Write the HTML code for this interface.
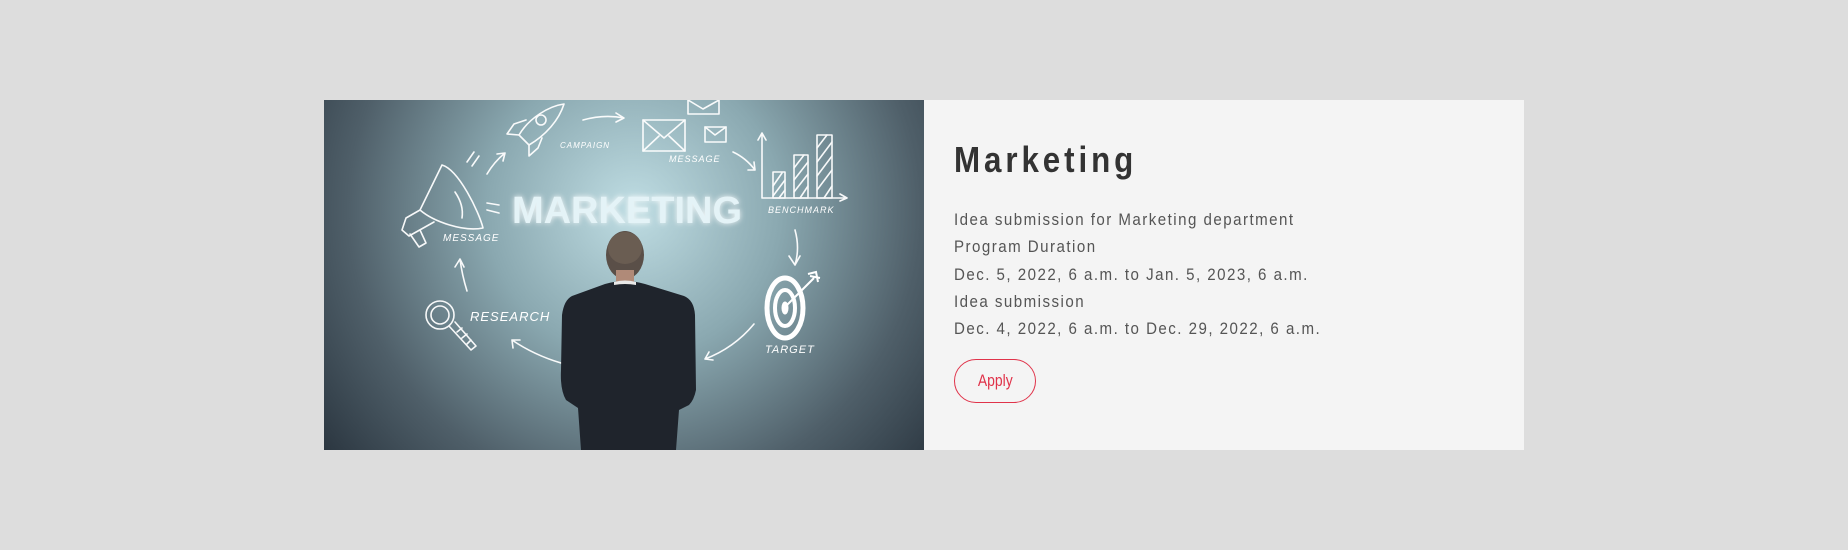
<!DOCTYPE html>
<html><head><meta charset="utf-8"><style>
html,body{margin:0;padding:0;}
body{width:1848px;height:550px;background:#dddddd;position:relative;overflow:hidden;font-family:"Liberation Sans Narrow","Liberation Sans",sans-serif;}
.card{position:absolute;left:324px;top:100px;width:1200px;height:350px;background:#f4f4f4;}
.img{position:absolute;left:0;top:0;width:600px;height:350px;}
.txt{position:absolute;left:600px;top:0;width:600px;height:350px;}
h1{position:absolute;left:30px;top:38px;margin:0;font-size:36px;font-weight:bold;letter-spacing:4.5px;color:#333;line-height:44px;transform:scaleX(0.87);transform-origin:0 0;white-space:nowrap;}
.lines{position:absolute;left:30px;top:107px;font-size:16.5px;letter-spacing:1.6px;color:#555;line-height:27.3px;transform:scaleX(0.915);transform-origin:0 0;white-space:nowrap;}
.btn{position:absolute;left:30px;top:259px;width:82px;height:44px;border:1px solid #e0334a;border-radius:23px;box-sizing:border-box;color:#e0334a;font-size:17px;text-align:center;line-height:42px;}
.btn span{display:inline-block;transform:scaleX(0.82);}
</style></head><body>
<div class="card">
<svg class="img" viewBox="0 0 600 350" width="600" height="350" xmlns="http://www.w3.org/2000/svg">
<defs>
<radialGradient id="bg" cx="310" cy="110" r="420" gradientUnits="userSpaceOnUse">
<stop offset="0" stop-color="#bfdde3"/><stop offset="0.35" stop-color="#8aa8b0"/><stop offset="0.68" stop-color="#4f5f69"/><stop offset="1" stop-color="#222c36"/>
</radialGradient>
<filter id="gl"><feGaussianBlur stdDeviation="3"/></filter>
</defs>
<rect width="600" height="350" fill="url(#bg)"/>
<g fill="none" stroke="#fff" stroke-width="1.6" stroke-linecap="round" stroke-linejoin="round" opacity="0.95">
<path d="M240 4 C225 6 205 18 195 35 L205 45 C222 35 235 20 240 4Z"/>
<circle cx="217" cy="20" r="5"/>
<path d="M195 35 L183 34 L190 24 L202 20 M205 45 L205 56 L214 48 L218 38"/>
<path d="M259 20 Q280 14 300 18 M292 13 L300 18 L292 22"/>
<path d="M163 74 Q170 62 181 53 M173 54 L181 53 L179 61"/>
<path d="M409 52 Q422 58 431 70 M424 70 L431 70 L430 62"/>
<path d="M471 130 Q476 148 471 165 M465 156 L471 165 L476 156"/>
<path d="M430 224 Q410 248 381 259 M385 252 L381 259 L389 260"/>
<path d="M237 263 Q210 255 188 240 M189 248 L188 240 L196 240"/>
<path d="M143 191 Q138 175 136 159 M131 167 L136 159 L140 167"/>
<rect x="319" y="20" width="42" height="31"/><path d="M319 20 L340 38 L361 20 M319 51 L335 36 M361 51 L345 36"/>
<rect x="381" y="27" width="21" height="15"/><path d="M381 27 L391 35 L402 27"/>
<path d="M364 0 L364 14 L395 14 L395 0 M364 0 L379 9 L395 0"/>
<path d="M438 98 L438 33 M434 40 L438 33 L442 40 M438 98 L523 98 M516 94 L523 98 L516 101"/>
<rect x="449" y="72" width="12" height="26"/><rect x="470" y="55" width="14" height="43"/><rect x="493" y="35" width="15" height="63"/>
<path d="M449 86 L458 73 M449 96 L461 80 M455 98 L461 90 M470 68 L480 55 M470 80 L484 62 M470 92 L484 74 M476 98 L484 86 M493 48 L503 35 M493 62 L508 42 M493 76 L508 56 M493 90 L508 70 M500 98 L508 86"/>
<path d="M118 65 C135 70 155 112 159 128 C140 132 110 122 96 110 Z"/>
<path d="M96 110 L82 118 L78 130 L85 136 L110 122"/>
<path d="M86 134 L95 147 L102 143 L96 130"/>
<path d="M131 92 Q140 105 138 118 M163 103 L175 105 M163 110 L175 113 M143 62 L150 52 M148 66 L155 56"/>
<circle cx="116" cy="215" r="14"/><circle cx="116" cy="215" r="9"/>
<path d="M125 226 L147 250 L152 246 L131 222 M133 232 L138 228 M138 238 L143 234 M143 244 L147 240"/>
</g>
<g fill="none" stroke="#fff">
<ellipse cx="461" cy="208" rx="18" ry="30" stroke-width="5"/>
<ellipse cx="461" cy="208" rx="10" ry="18" stroke-width="4"/>
<ellipse cx="461" cy="208" rx="3" ry="6" fill="#fff"/>
<path d="M463 205 L490 178 M484 174 L492 172 L494 182 M486 176 L496 178" stroke-width="2"/>
</g>
<g fill="#fff" font-family="Liberation Sans,sans-serif" font-style="italic" letter-spacing="1">
<text x="236" y="48" font-size="8">CAMPAIGN</text>
<text x="345" y="62" font-size="9">MESSAGE</text>
<text x="444" y="113" font-size="9">BENCHMARK</text>
<text x="441" y="253" font-size="11">TARGET</text>
<text x="146" y="221" font-size="13">RESEARCH</text>
<text x="119" y="141" font-size="10">MESSAGE</text>
</g>
<text x="303" y="123" text-anchor="middle" font-family="Liberation Sans,sans-serif" font-weight="bold" font-size="38" fill="#fff" filter="url(#gl)" opacity="0.9">MARKETING</text>
<text x="303" y="123" text-anchor="middle" font-family="Liberation Sans,sans-serif" font-weight="bold" font-size="38" fill="#e4f3f7">MARKETING</text>
<ellipse cx="301" cy="155" rx="19" ry="24" fill="#5a4f48"/>
<ellipse cx="301" cy="148" rx="17" ry="16" fill="#6a5d52"/>
<rect x="292" y="170" width="18" height="14" fill="#b08a78"/>
<path d="M281 184 Q301 178 321 184 L360 196 Q370 200 371 215 L372 290 Q370 300 365 305 L355 310 L352 350 L257 350 L254 308 L242 300 Q236 290 237 270 L238 215 Q240 200 248 196 Z" fill="#1f242c"/>
<path d="M290 182 Q301 179 312 182 L312 185 Q301 183 290 185Z" fill="#e8e8e8"/>
</svg>
<div class="txt">
<h1>Marketing</h1>
<div class="lines">Idea submission for Marketing department<br>Program Duration<br>Dec. 5, 2022, 6 a.m. to Jan. 5, 2023, 6 a.m.<br>Idea submission<br>Dec. 4, 2022, 6 a.m. to Dec. 29, 2022, 6 a.m.</div>
<div class="btn"><span>Apply</span></div>
</div>
</div>
</body></html>
